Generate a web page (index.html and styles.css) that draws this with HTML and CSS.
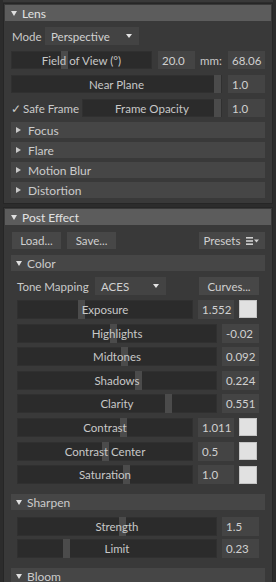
FILE: index.html
```html
<!DOCTYPE html>
<html lang="en">
<head>
    <meta charset="UTF-8">
    <meta name="viewport" content="width=device-width, initial-scale=1.0">
    <title>Camera Settings</title>
    <link rel="stylesheet" href="styles.css">
</head>
<body>
    <div class="prev"></div>

    <!-- lens section -->
    <section class="panel">
        <div class="header"><span class="tri-down"></span>Lens</div>
        <div class="body lens">
            <div class="row">
                <span class="label mode">Mode</span>
                <div class="dropdown persp">Perspective<span class="caret"></span></div>
            </div>
            <div class="row">
                <div class="slider"><i class="handle" style="left:35.2%"></i><span>Field of View (°)</span></div>
                <div class="field">20.0</div>
                <span class="label mm">mm:</span>
                <div class="field">68.06</div>
            </div>
            <div class="row">
                <div class="slider"><i class="handle end"></i><span>Near Plane</span></div>
                <div class="field">1.0</div>
            </div>
            <div class="row">
                <span class="label check">&#10003;</span>
                <span class="label safe">Safe Frame</span>
                <div class="slider"><i class="handle end"></i><span>Frame Opacity</span></div>
                <div class="field">1.0</div>
            </div>
            <div class="subs">
                <div class="sub"><span class="tri-right"></span>Focus</div>
                <div class="sub"><span class="tri-right"></span>Flare</div>
                <div class="sub"><span class="tri-right"></span>Motion Blur</div>
                <div class="sub"><span class="tri-right"></span>Distortion</div>
            </div>
        </div>
    </section>

    <!-- post effect section -->
    <section class="panel">
        <div class="header"><span class="tri-down"></span>Post Effect</div>
        <div class="body post">
            <div class="row buttons">
                <div class="btn load">Load...</div>
                <div class="btn save">Save...</div>
                <div class="btn presets">Presets
                    <svg width="14" height="8" viewBox="0 0 14 8">
                        <rect x="0" y="0" width="7" height="1.6" fill="#cfcfcf"/>
                        <rect x="0" y="3.2" width="7" height="1.6" fill="#cfcfcf"/>
                        <rect x="0" y="6.4" width="7" height="1.6" fill="#cfcfcf"/>
                        <polygon points="8,2.5 13,2.5 10.5,5.5" fill="#cfcfcf"/>
                    </svg>
                </div>
            </div>

            <div class="group">
                <div class="sub open"><span class="tri-down"></span>Color</div>
                <div class="group-body color">
                    <div class="row tone">
                        <span class="label tm">Tone Mapping</span>
                        <div class="dropdown aces">ACES<span class="caret"></span></div>
                        <div class="btn curves">Curves...</div>
                    </div>
                    <div class="row prop">
                        <div class="slider"><i class="handle" style="left:34.5%"></i><span>Exposure</span></div>
                        <div class="field f36">1.552</div>
                        <div class="swatch"></div>
                    </div>
                    <div class="row prop">
                        <div class="slider"><i class="handle" style="left:46.5%"></i><span>Highlights</span></div>
                        <div class="field">-0.02</div>
                    </div>
                    <div class="row prop">
                        <div class="slider"><i class="handle" style="left:52%"></i><span>Midtones</span></div>
                        <div class="field">0.092</div>
                    </div>
                    <div class="row prop">
                        <div class="slider"><i class="handle" style="left:59%"></i><span>Shadows</span></div>
                        <div class="field">0.224</div>
                    </div>
                    <div class="row prop">
                        <div class="slider"><i class="handle" style="left:74%"></i><span>Clarity</span></div>
                        <div class="field">0.551</div>
                    </div>
                    <div class="row prop">
                        <div class="slider"><i class="handle" style="left:58.6%"></i><span>Contrast</span></div>
                        <div class="field f36">1.011</div>
                        <div class="swatch"></div>
                    </div>
                    <div class="row prop">
                        <div class="slider"><i class="handle" style="left:48.3%"></i><span>Contrast Center</span></div>
                        <div class="field f36">0.5</div>
                        <div class="swatch"></div>
                    </div>
                    <div class="row prop">
                        <div class="slider"><i class="handle" style="left:60.3%"></i><span>Saturation</span></div>
                        <div class="field f36">1.0</div>
                        <div class="swatch"></div>
                    </div>
                </div>
            </div>

            <div class="group">
                <div class="sub open"><span class="tri-down"></span>Sharpen</div>
                <div class="group-body sharpen">
                    <div class="row prop">
                        <div class="slider"><i class="handle" style="left:51%"></i><span>Strength</span></div>
                        <div class="field">1.5</div>
                    </div>
                    <div class="row prop">
                        <div class="slider"><i class="handle" style="left:22.5%"></i><span>Limit</span></div>
                        <div class="field">0.23</div>
                    </div>
                </div>
            </div>

            <div class="group">
                <div class="sub open"><span class="tri-down"></span>Bloom</div>
            </div>
        </div>
    </section>
</body>
</html>
```

FILE: styles.css
```css
* {
    padding: 0px;
    margin: 0px;
    box-sizing: border-box;
}
body {
    background-color: #2c2c2c;
    color: #cacaca;
    font-family: Lato, "Noto Sans", sans-serif;
    font-size: 11.5px;
    padding: 0 3px;
    display: flex;
    flex-direction: column;
    gap: 3px;
    height: 582px;
    overflow: hidden;
}
.prev {
    height: 2px;
    margin-bottom: -2px;
    background-color: #393939;
    flex-shrink: 0;
}
.panel {
    background-color: #393939;
    border: 1px solid #262626;
    padding: 1px;
    flex-shrink: 0;
}
.header {
    height: 16px;
    background-color: #5c5c5c;
    color: #e2e2e2;
    display: flex;
    align-items: center;
    padding-left: 6px;
    font-size: 12px;
}
.tri-down {
    width: 0;
    height: 0;
    border-left: 3px solid transparent;
    border-right: 3px solid transparent;
    border-top: 5px solid #e0e0e0;
    margin-right: 5px;
}
.tri-right {
    width: 0;
    height: 0;
    border-top: 3px solid transparent;
    border-bottom: 3px solid transparent;
    border-left: 5px solid #c8c8c8;
    margin-right: 7px;
}
.body {
    padding: 6px 6px 4px 6px;
    display: flex;
    flex-direction: column;
    gap: 6px;
}
.row {
    display: flex;
    align-items: center;
    height: 18px;
    gap: 6px;
}
.label {
    white-space: nowrap;
    flex-shrink: 0;
}
.mode {
    width: 27px;
    margin-left: 1px;
}
.mm {
    width: 22px;
    margin-left: -1px;
}
.check {
    width: 10px;
    margin-right: -4px;
    font-size: 12px;
}
.safe {
    width: 55px;
    margin-right: -2px;
}
.dropdown {
    height: 18px;
    background-color: #434343;
    display: flex;
    align-items: center;
    padding-left: 6px;
    position: relative;
    color: #d2d2d2;
    flex-shrink: 0;
}
.caret {
    position: absolute;
    right: 7px;
    top: 7px;
    width: 0;
    height: 0;
    border-left: 3px solid transparent;
    border-right: 3px solid transparent;
    border-top: 4px solid #e4e4e4;
}
.persp {
    width: 94px;
}
.slider {
    flex: 1;
    height: 100%;
    background-color: #2b2b2b;
    border: 1px solid #303030;
    position: relative;
    display: flex;
    align-items: center;
    justify-content: center;
    color: #c8c8c8;
}
.slider span {
    position: relative;
    white-space: nowrap;
}
.handle {
    position: absolute;
    top: -1px;
    bottom: -1px;
    width: 7px;
    background-color: #4b4b4b;
}
.handle.end {
    right: 0;
}
.field {
    width: 37px;
    height: 100%;
    background-color: #444444;
    color: #d0d0d0;
    display: flex;
    align-items: center;
    padding-left: 4px;
    flex-shrink: 0;
}
.f36 {
    width: 36px;
}
.swatch {
    width: 18px;
    height: 18px;
    background-color: #e1e1e1;
    border: 1px solid #c4c4c4;
    flex-shrink: 0;
    margin-right: 2px;
}
.subs {
    display: flex;
    flex-direction: column;
    gap: 4px;
    margin-top: -1px;
}
.sub {
    height: 16px;
    background-color: #464646;
    display: flex;
    align-items: center;
    padding-left: 5px;
    color: #cbcbcb;
    font-size: 12px;
}

/* post effect */
.post {
    padding-top: 7px;
    gap: 6px;
}
.buttons {
    height: 17px;
    gap: 6px;
}
.btn {
    height: 100%;
    background-color: #474747;
    display: flex;
    align-items: center;
    justify-content: center;
    color: #d0d0d0;
    gap: 6px;
    flex-shrink: 0;
}
.load {
    width: 49px;
    margin-left: 1px;
}
.save {
    width: 49px;
}
.presets {
    width: 66px;
    margin-left: auto;
}
.group {
    display: flex;
    flex-direction: column;
}
.post .group + .group {
    margin-top: -2px;
}
.group-body {
    padding: 6px;
    display: flex;
    flex-direction: column;
    gap: 4.6px;
}
.tone {
    margin-bottom: 0.4px;
}
.tm {
    width: 72px;
}
.aces {
    width: 71px;
}
.curves {
    width: 60px;
    height: 18px;
    margin-left: auto;
}
.prop {
    height: 19px;
    gap: 5px;
}
.sharpen {
    padding-top: 7px;
    gap: 3px;
}
```
